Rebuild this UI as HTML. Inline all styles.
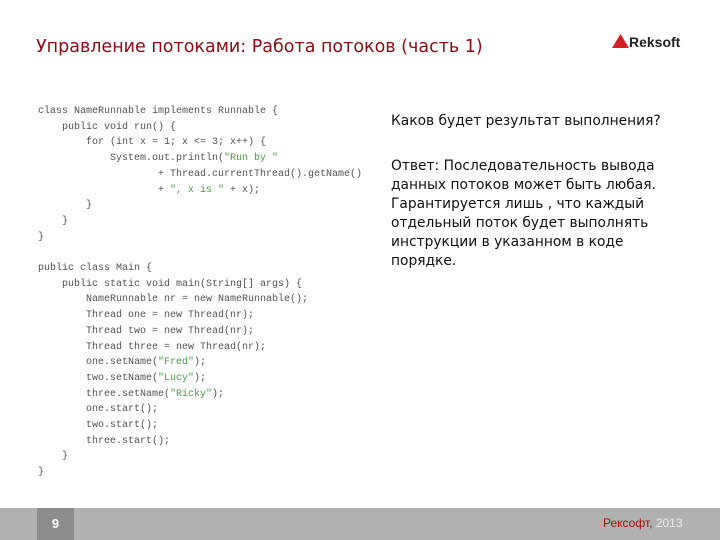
<!DOCTYPE html>
<html><head><meta charset="utf-8"><style>
body{margin:0;width:720px;height:540px;background:#fff;position:relative;overflow:hidden;font-family:"Liberation Sans","DejaVu Sans",sans-serif}
.t{position:absolute;left:36px;top:37px;font-family:"DejaVu Sans",sans-serif;font-size:17.5px;color:#8b0a14;white-space:nowrap}
.logo{position:absolute;left:612px;top:34px;font-size:14px;font-weight:bold;color:#222;}
.code{position:absolute;left:38px;top:104px;font-family:"Liberation Mono",monospace;font-size:10px;line-height:15.7px;color:#333;white-space:pre;opacity:.85}
.code s{text-decoration:none;color:#2a8a2a}
.r{position:absolute;left:391px;font-family:"DejaVu Sans",sans-serif;font-size:13.8px;line-height:19px;color:#111;white-space:nowrap}
.foot{position:absolute;left:0;top:508px;width:720px;height:32px;background:#b1b1b1}
.pn{position:absolute;left:37px;top:508px;width:37px;height:32px;background:#8c8c8c;color:#fff;font-size:13px;font-weight:bold;text-align:center;line-height:32px}
.fr{position:absolute;left:603px;top:516px;font-size:12px;color:#a01010}
.fr span{color:#eee}
</style></head><body>
<div class="t">Управление потоками: Работа потоков (часть 1)</div>
<div class="logo"><svg width="17" height="14" style="vertical-align:-1px"><polygon points="0,14 8.5,0 17,14" fill="#d41f26"/></svg>Reksoft</div>
<div class="code">class NameRunnable implements Runnable {
    public void run() {
        for (int x = 1; x &lt;= 3; x++) {
            System.out.println(<s>"Run by "</s>
                    + Thread.currentThread().getName()
                    + <s>", x is "</s> + x);
        }
    }
}

public class Main {
    public static void main(String[] args) {
        NameRunnable nr = new NameRunnable();
        Thread one = new Thread(nr);
        Thread two = new Thread(nr);
        Thread three = new Thread(nr);
        one.setName(<s>"Fred"</s>);
        two.setName(<s>"Lucy"</s>);
        three.setName(<s>"Ricky"</s>);
        one.start();
        two.start();
        three.start();
    }
}</div>
<div class="r" style="top:112px">Каков будет результат выполнения?</div>
<div class="r" style="top:157px">Ответ: Последовательность вывода<br>данных потоков может быть любая.<br>Гарантируется лишь , что каждый<br>отдельный поток будет выполнять<br>инструкции в указанном в коде<br>порядке.</div>
<div class="foot"></div>
<div class="pn">9</div>
<div class="fr">Рексофт, <span>2013</span></div>
</body></html>
